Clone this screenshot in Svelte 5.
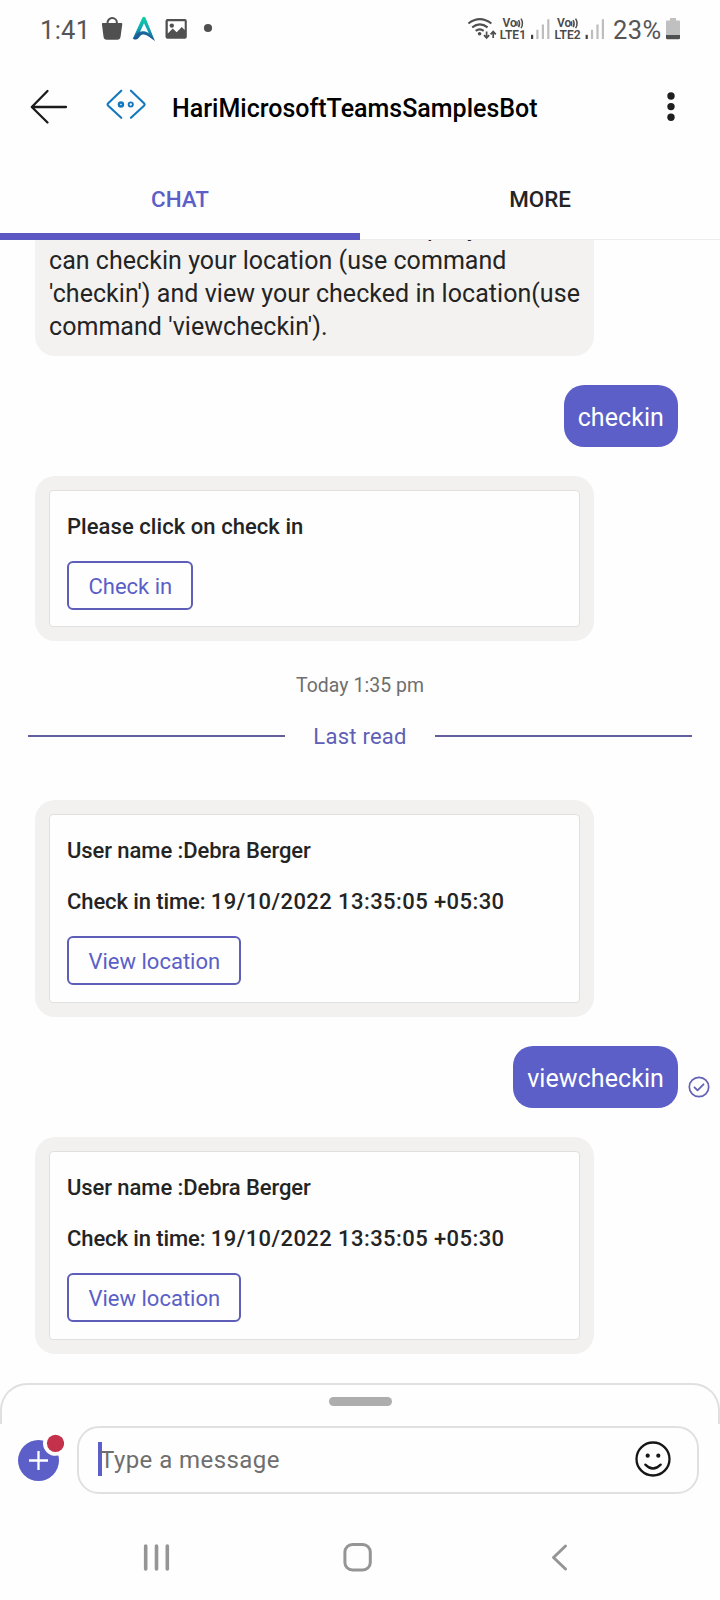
<script>
  const checkIns = {
    user: 'User name :Debra Berger',
    label: 'Check in time: ',
    time: '19/10/2022 13:35:05 +05:30'
  };
  const sims = [{ label: 'LTE1', x: 500 }, { label: 'LTE2', x: 554.6 }];
</script>

{#snippet locationCard()}
  <div class="card">
    <div class="inner location">
      <p class="line user">{checkIns.user}</p>
      <p class="line"><span class="label">{checkIns.label}</span><span class="time">{checkIns.time}</span></p>
      <button>View location</button>
    </div>
  </div>
{/snippet}

<div class="phone">
  <div class="status">
    <span class="clock">1:41</span>
    <svg class="left-icons" width="116" height="34" viewBox="98 12 116 34">
      <path d="M107.500 24v-1.2a4.700 4.700 0 0 1 9.400 0V24" fill="none" stroke="#505050" stroke-width="2" />
      <path d="M102.800 23h18.600q1 0 .9 1l-1.700 12.500q-.5 3.200-3.400 3.200h-10.400q-2.900 0-3.300-3.200L101.900 24q-.1-1 .9-1z" fill="#505050" />
      <defs>
        <linearGradient id="peak" x1="0" y1="0" x2="0" y2="1">
          <stop offset="0" stop-color="#12d3a4" />
          <stop offset=".5" stop-color="#12a3b5" />
          <stop offset="1" stop-color="#1b5690" />
        </linearGradient>
      </defs>
      <path d="M143.800 16.800q1.200 0 1.800 1.300l9.300 22.800-7.800-5.600q-3.300-2.800-6.300 0l-2.700 3.200q-2 1.600-5.300.3l9.400-20.700q.6-1.300 1.600-1.300zm.2 6.400-4.300 9.600q4.300-3.200 9 .1z" fill="url(#peak)" fill-rule="evenodd" />
      <path d="M133 38.800q3.500-7.600 9.500-7.500 5 .3 12.300 9.500-8-6.600-11.800-6.300-3 .2-5.200 3.800-1.600 1.800-4.800.5z" fill="#1d5a96" opacity=".8" />
      <path fill-rule="evenodd" fill="#505050" d="M167.500 19h17.300q2 0 2 2v15.800q0 2-2 2h-17.300q-2 0-2-2V21q0-2 2-2zm.3 2.200v12.300l4.900-5 4 3.700 5-5.300 3 3.100v-8.800z" />
      <circle cx="171.800" cy="25.600" r="2.200" fill="#505050" />
      <circle cx="208" cy="28" r="4.100" fill="#505050" />
    </svg>
    <svg class="right-icons" width="142" height="34" viewBox="466 12 142 34">
      <g fill="none" stroke="#505050" stroke-width="2.100">
        <path d="M468.400 23.500q11.400-8.600 23 0" />
        <path d="M472.200 27.400q7.700-6 15.400 0" />
        <path d="M475.700 30.800q4-3 8 0" />
      </g>
      <circle cx="479.600" cy="33.800" r="1.800" fill="#505050" />
      <path d="M486.600 31.500v6.300m-2.600-2.700 2.600 2.800 2.600-2.800M493.200 38v-6.300m-2.600 2.700 2.600-2.800 2.600 2.800" fill="none" stroke="#505050" stroke-width="1.700" />
      {#each sims as sim}
        <g transform="translate({sim.x} 0)">
          <text x="2.500" y="27.200" class="sim">Vo</text>
          <path d="M16.800 21.200q.7 1.900 0 4.800M18.600 20q1.900 3.500 0 7.200M21 18.600q3 4.800 0 9.600" fill="none" stroke="#505050" stroke-width="1.500" />
          <text x="-.2" y="39" class="sim" textLength="26.200">{sim.label}</text>
          <path d="M31 34.800h2.200V39H31z" fill="#404040" />
          <path d="M36.300 29.700h2.200V39h-2.200zM41.800 24.500H44V39h-2.200zM47.200 19.300h2.200V39h-2.200z" fill="#bdbdbd" />
        </g>
      {/each}
    </svg>
    <span class="percent">23%</span>
    <svg class="battery" width="14" height="22" viewBox="0 0 14 22">
      <path d="M4 0h6v2.500h3q1 0 1 1V17H0V3.500q0-1 1-1h3z" fill="#c0c0c0" />
      <path d="M0 17h14v3q0 1.200-1.200 1.200H1.200Q0 21.200 0 20z" fill="#505050" />
    </svg>
  </div>

  <header>
    <svg class="back" width="38" height="36" viewBox="0 0 38 36">
      <path d="M36 18H2M17.500 2 1.800 18l15.700 15.500" fill="none" stroke="#1b1b1b" stroke-width="2.300" stroke-linecap="round" stroke-linejoin="round" />
    </svg>
    <svg class="bot" width="40" height="31" viewBox="0 0 42 32">
      <g fill="none" stroke="#1478bd" stroke-width="2.200" stroke-linecap="round" stroke-linejoin="round">
        <path d="M16 1.500 2.300 14.600q-1.200 1.300 0 2.600L16 30" />
        <path d="M26.200 1.500 39.900 14.600q1.200 1.300 0 2.600L26.200 30" />
        <circle cx="15.700" cy="16" r="2.100" stroke-width="2.600" />
        <circle cx="26" cy="16" r="2.200" stroke-width="2" />
      </g>
    </svg>
    <h1>HariMicrosoftTeamsSamplesBot</h1>
    <svg class="more" width="8" height="30" viewBox="0 0 8 30">
      <g fill="#1f1f1f"><circle cx="4" cy="4" r="3.700" /><circle cx="4" cy="14.600" r="3.700" /><circle cx="4" cy="25.200" r="3.700" /></g>
    </svg>
  </header>

  <nav class="tabs">
    <div class="tab active">CHAT</div>
    <div class="tab">MORE</div>
  </nav>

  <main>
    <div class="bubble bot-text">
      Hello and welcome! With this sample you<br />can checkin your location (use command<br />'checkin') and view your checked in location(use<br />command 'viewcheckin').
    </div>
    <div class="sent"><div class="bubble mine">checkin</div></div>
    <div class="card">
      <div class="inner">
        <p class="line">Please click on check in</p>
        <button>Check in</button>
      </div>
    </div>
    <div class="divider">
      <div class="stamp">Today 1:35 pm</div>
      <div class="last-read"><i></i><span>Last read</span><i></i></div>
    </div>
    {@render locationCard()}
    <div class="sent">
      <div class="bubble mine">viewcheckin</div>
      <svg class="seen" width="22" height="22" viewBox="0 0 22 22">
        <circle cx="11" cy="11" r="9.700" fill="none" stroke="#6462b5" stroke-width="1.700" />
        <path d="m6.500 11.300 3 3 6-6" fill="none" stroke="#6462b5" stroke-width="1.800" stroke-linecap="round" stroke-linejoin="round" />
      </svg>
    </div>
    {@render locationCard()}
  </main>

  <footer>
    <div class="sheet"><div class="handle"></div></div>
    <div class="compose">
      <svg class="add" width="48" height="50" viewBox="16 1432 48 50">
        <circle cx="38.500" cy="1460.500" r="20.500" fill="#5b5fc7" />
        <path d="M29 1460.500h19M38.500 1451v19" stroke="#fff" stroke-width="2.300" />
        <circle cx="55.500" cy="1443.300" r="12.500" fill="#fff" />
        <circle cx="55.500" cy="1443.300" r="8.600" fill="#c4314b" />
      </svg>
      <div class="field">
        <span class="caret"></span>
        <span class="hint">Type a message</span>
        <svg class="smile" width="36" height="36" viewBox="0 0 36 36">
          <circle cx="18" cy="18" r="16.500" fill="none" stroke="#161616" stroke-width="2.300" />
          <circle cx="12.700" cy="14.700" r="2.100" fill="#161616" />
          <circle cx="23.300" cy="14.700" r="2.100" fill="#161616" />
          <path d="M10.300 23.600q7.700 7.800 15.400 0" fill="none" stroke="#161616" stroke-width="2.300" stroke-linecap="round" />
        </svg>
      </div>
    </div>
    <svg class="system" width="720" height="32" viewBox="0 1541 720 32">
      <g fill="none" stroke="#959595" stroke-width="3.600" stroke-linecap="round" stroke-linejoin="round">
        <path d="M145.700 1546v23M156.500 1546v23M167.300 1546v23" />
        <rect x="344.900" y="1544.600" width="25.400" height="25.400" rx="7.500" stroke-width="3" />
        <path d="M565.500 1546 553.500 1557.500 565.500 1569" stroke-width="3" />
      </g>
    </svg>
  </footer>
</div>

<style>
  :global(body) { background: #fff; }
  .phone {
    width: 720px; height: 1600px; display: flex; flex-direction: column; overflow: hidden;
    background: #fefefe; color: #242424; font-family: Roboto, sans-serif; white-space: nowrap;
  }
  svg { display: block; flex: none; }
  .status { height: 60px; flex: none; display: flex; align-items: flex-start; color: #555; box-sizing: border-box; padding: 12px 40px 0 40px; }
  .clock, .percent { font-size: 25.5px; line-height: 34px; margin-top: 1px; }
  .clock { width: 58px; letter-spacing: .3px; }
  .right-icons { margin-left: auto; }
  .percent { width: 52px; margin-left: 5px; letter-spacing: .4px; }
  .battery { margin: 6px 0 0 1px; }
  .sim { font: 600 12px Roboto, sans-serif; fill: #4a4a4a; }

  header { height: 100px; flex: none; display: flex; align-items: flex-start; box-sizing: border-box; padding: 29px 45px 0 30px; }
  .bot { margin-left: 38px; }
  h1 { margin: 4px 0 0 26px; font-size: 25px; line-height: 32px; font-weight: 500; color: #000; }
  .more { margin: 3px 0 0 auto; }

  .tabs { height: 80px; flex: none; display: flex; box-sizing: border-box; }
  .tab { flex: 1; text-align: center; font-size: 22.4px; font-weight: 500; line-height: 78px; height: 80px; box-sizing: border-box; border-bottom: 1px solid #ececec; }
  .tab.active { color: #5b5fc7; border-bottom: 7px solid #5b58c4; }

  main { height: 1143px; flex: none; box-sizing: border-box; display: flex; flex-direction: column; justify-content: flex-end; gap: 29px; overflow: hidden; padding: 0 0 29px 35px; }
  .bubble { font-size: 25px; line-height: 33px; letter-spacing: .08px; border-radius: 20px; box-sizing: border-box; }
  .bot-text { width: 559px; background: #f3f2f1; padding: 14px 14px 13px; flex: none; letter-spacing: .04px; }
  .sent { height: 62px; flex: none; display: flex; justify-content: flex-end; padding-right: 42px; position: relative; }
  .mine { background: #5b5fc7; color: #fff; padding: 16px 14px 13px; }
  .seen { position: absolute; right: 10px; top: 30px; }
  .card { width: 559px; flex: none; box-sizing: border-box; background: #f2f1f0; border-radius: 20px; padding: 14px; }
  .inner { background: #fefefe; border: 1px solid #e1e0df; border-radius: 4px; padding: 23px 17px 16px; }
  .inner.location { padding-bottom: 17px; }
  .line { margin: 0 0 25px; font-size: 22px; line-height: 26px; font-weight: 500; letter-spacing: .06px; }
  .line:nth-last-child(2) { margin-bottom: 21px; }
  .user { letter-spacing: -.08px; }
  .label { letter-spacing: -.1px; white-space: pre; }
  .time { letter-spacing: .42px; }
  button { display: block; height: 49px; box-sizing: border-box; padding: 0 19px 0 19.5px; border: 2px solid #5e5eb8; border-radius: 6px; background: #fefefe; color: #5b5fc7; font: 22px/47px Roboto, sans-serif; }
  .divider { height: 101px; flex: none; margin-left: -35px; display: flex; flex-direction: column; }
  .stamp { margin-top: 3px; text-align: center; font-size: 19.4px; letter-spacing: .08px; line-height: 26px; color: #6e6e6e; }
  .last-read { margin-top: 25px; display: flex; align-items: center; padding: 0 28px; color: #5e5fb5; font-size: 22px; line-height: 26px; letter-spacing: .25px; }
  .last-read i { flex: 1; height: 2px; background: #625f9c; margin-top: -2px; }
  .last-read span { padding: 0 28px; }

  footer { flex: none; height: 217px; display: flex; flex-direction: column; }
  .sheet { height: 41px; flex: none; box-sizing: border-box; border: 2px solid #e0e0e0; border-bottom: 0; border-radius: 27px 27px 0 0; }
  .handle { width: 63px; height: 9px; border-radius: 5px; background: #adadad; margin: 12px auto 0; }
  .compose { display: flex; align-items: flex-start; padding: 2px 21px 0 16px; }
  .add { margin-top: 6px; }
  .field { margin-left: 13px; flex: 1; height: 68px; box-sizing: border-box; border: 2px solid #e0e0e0; border-radius: 22px; display: flex; align-items: center; padding: 0 26px 0 19px; }
  .caret { width: 4px; height: 34px; background: #5b5fc7; margin-top: -2px; }
  .hint { font-size: 24px; letter-spacing: .43px; color: #6e6e6e; margin: 1px auto 0 -2px; line-height: 31px; }
  .smile { margin-top: -3px; }
  .system { margin-top: 47px; }
</style>
